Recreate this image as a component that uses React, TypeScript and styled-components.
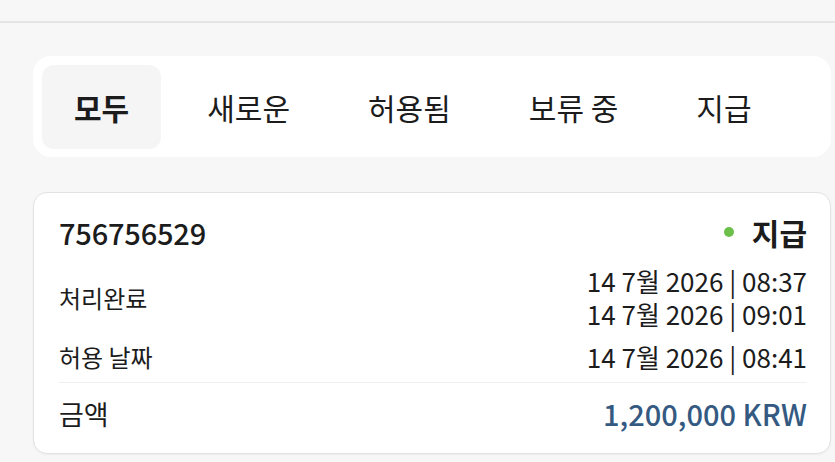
import React from "react";
import styled, { createGlobalStyle } from "styled-components";

const GlobalStyle = createGlobalStyle`
  html, body {
    margin: 0;
    padding: 0;
    background: #f7f7f7;
  }
  body {
    font-family: "Noto Sans CJK KR", "Noto Sans", sans-serif;
    color: #1c1c1c;
  }
`;

const Page = styled.div`
  min-height: 462px;
  background: #f7f7f7;
`;

const TopBar = styled.div`
  height: 21px;
  border-bottom: 2px solid #e5e5e5;
`;

const Content = styled.main`
  display: flex;
  flex-direction: column;
  gap: 35px;
  padding: 33px 4px 0 33px;
`;

const TabPanel = styled.nav`
  display: flex;
  align-items: center;
  gap: 14px;
  background: #ffffff;
  border-radius: 18px;
  padding: 9px 9px 8px;
`;

const Tab = styled.button<{ $active?: boolean }>`
  height: 84px;
  padding: 0 32px;
  border: none;
  border-radius: 12px;
  background: ${(p) => (p.$active ? "#f5f5f5" : "transparent")};
  font-family: inherit;
  font-size: 30px;
  font-weight: ${(p) => (p.$active ? 700 : 400)};
  color: #1c1c1c;
  white-space: nowrap;
  cursor: pointer;
`;

const Card = styled.section`
  background: #ffffff;
  border: 1px solid #e2e2e2;
  border-radius: 14px;
  box-shadow: 0 1px 2px rgba(0, 0, 0, 0.04);
  padding: 19px 23px 10px 25px;
  display: flex;
  flex-direction: column;
`;

const CardHeader = styled.div`
  display: flex;
  align-items: center;
  justify-content: space-between;
  height: 40px;
  margin-bottom: 12px;
`;

const OrderId = styled.span`
  font-size: 29px;
  font-weight: 500;
  letter-spacing: -0.2px;
`;

const Status = styled.span`
  display: flex;
  align-items: center;
  gap: 18px;
  font-size: 30px;
  font-weight: 700;
`;

const Dot = styled.span<{ $color: string }>`
  width: 10px;
  height: 10px;
  border-radius: 50%;
  background: ${(p) => p.$color};
`;

const DetailRow = styled.div<{ $after?: number }>`
  display: flex;
  align-items: center;
  justify-content: space-between;
  padding-bottom: ${(p) => p.$after ?? 8}px;
`;

const Label = styled.span`
  font-size: 24px;
  line-height: 33px;
`;

const Dates = styled.div`
  display: flex;
  flex-direction: column;
  align-items: flex-end;
  font-size: 26px;
  line-height: 33px;
`;

const Divider = styled.hr`
  border: none;
  border-top: 1px solid #f0f0f0;
  margin: 1px 0 0;
`;

const TotalRow = styled.div`
  display: flex;
  align-items: center;
  justify-content: space-between;
  height: 60px;
`;

const TotalLabel = styled.span`
  font-size: 27px;
`;

const Amount = styled.span`
  font-size: 29px;
  font-weight: 500;
  color: #355a82;
`;

const tabs = ["모두", "새로운", "허용됨", "보류 중", "지급"];

export default function App() {
  return (
    <>
      <GlobalStyle />
      <Page>
        <TopBar />
        <Content>
          <TabPanel>
            {tabs.map((t, i) => (
              <Tab key={t} $active={i === 0}>
                {t}
              </Tab>
            ))}
          </TabPanel>
          <Card>
            <CardHeader>
              <OrderId>756756529</OrderId>
              <Status>
                <Dot $color="#6cc04a" />
                지급
              </Status>
            </CardHeader>
            <DetailRow $after={10}>
              <Label>처리완료</Label>
              <Dates>
                <span>14 7월 2026 | 08:37</span>
                <span>14 7월 2026 | 09:01</span>
              </Dates>
            </DetailRow>
            <DetailRow>
              <Label>허용 날짜</Label>
              <Dates>
                <span>14 7월 2026 | 08:41</span>
              </Dates>
            </DetailRow>
            <Divider />
            <TotalRow>
              <TotalLabel>금액</TotalLabel>
              <Amount>1,200,000 KRW</Amount>
            </TotalRow>
          </Card>
        </Content>
      </Page>
    </>
  );
}
